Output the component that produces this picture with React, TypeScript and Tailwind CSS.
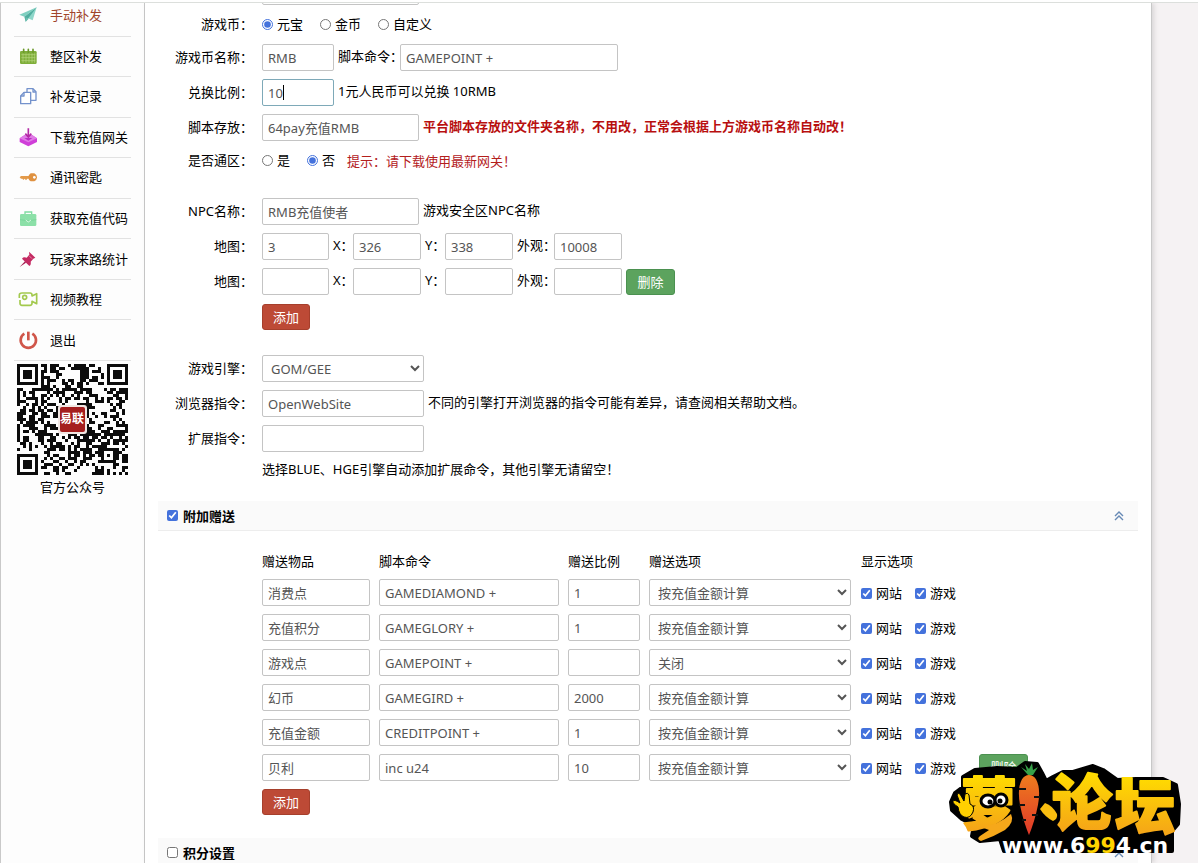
import type { ReactNode } from "react";

const inputBase =
  "h-[27px] rounded-[2px] border border-[#c4c4c4] bg-white px-[5px] text-[13px] text-[#555] outline-none";

function Icon({ children }: { children: ReactNode }) {
  return (
    <svg viewBox="0 0 60 60" className="size-5 shrink-0" aria-hidden="true">
      {children}
    </svg>
  );
}

const menu: { label: string; active?: boolean; icon: ReactNode }[] = [
  {
    label: "手动补发",
    active: true,
    icon: (
      <Icon>
        <path d="M56 7 4 29l15 6z" fill="#7fcfc0" />
        <path d="M56 7 23 37l21 9z" fill="#8ed6c9" />
        <path d="M56 7 19 35l4 15z" fill="#4fae9f" />
        <path d="m23 37 0 13 9-9z" fill="#6cbfb0" />
      </Icon>
    ),
  },
  {
    label: "整区补发",
    icon: (
      <Icon>
        <rect x="6" y="15" width="50" height="39" rx="4" fill="#7fae3a" />
        <path d="M17 10v9M31 10v9M45 10v9" stroke="#6d9a2c" strokeWidth="5" strokeLinecap="round" />
        <path d="M10 26h42M10 35h42M10 44h42M15 22v28M24 22v28M33 22v28M42 22v28M50 22v28" stroke="#b7d67f" strokeWidth="2" />
      </Icon>
    ),
  },
  {
    label: "补发记录",
    icon: (
      <Icon>
        <g fill="#fff" stroke="#7492cc" strokeWidth="4" strokeLinejoin="round">
          <path d="M27 8h18l9 9v26H27z" />
          <path d="M45 8v10h9" fill="none" />
          <path d="M8 30 18 19h20v34H8z" />
          <path d="M18 19v11H8" fill="none" />
        </g>
      </Icon>
    ),
  },
  {
    label: "下载充值网关",
    icon: (
      <Icon>
        <path d="M5 34 20 24h22l15 10v11L31 58 5 45z" fill="#cf3fd8" />
        <path d="M5 34 20 24h22l15 10-26 12z" fill="#e07be6" />
        <path d="M19 33h24l-12 8z" fill="#b82cc4" />
        <path d="M31 4v22M22 20l9 10 9-10" fill="none" stroke="#b32aa6" strokeWidth="5" />
      </Icon>
    ),
  },
  {
    label: "通讯密匙",
    icon: (
      <Icon>
        <path d="M34 27H9l-4 4 4 4h4l3 4 4-4 4 5 4-5h6z" fill="#e39a4a" />
        <path d="M38 19h11q8 4 8 12t-8 12H38q-7-4-7-12t7-12z" fill="#df9140" />
        <circle cx="49" cy="31" r="4" fill="#fff" />
      </Icon>
    ),
  },
  {
    label: "获取充值代码",
    icon: (
      <Icon>
        <path d="M21 20v-8h20v8" fill="none" stroke="#7fdca0" strokeWidth="4" />
        <rect x="6" y="18" width="49" height="36" rx="4" fill="#8ce0a8" />
        <path d="M6 35q25 6 49 0" stroke="#6fd092" strokeWidth="2" fill="none" />
        <path d="m23 36 8 6 8-6" fill="none" stroke="#d9f7e3" strokeWidth="3" />
      </Icon>
    ),
  },
  {
    label: "玩家来路统计",
    icon: (
      <Icon>
        <path d="M33 8 52 26l-6 3-8 9q2 10-4 13L12 29q4-6 14-3l8-9z" fill="#c42a62" />
        <path d="M21 37 5 54l19-13z" fill="#a51e50" />
        <path d="m33 20 9 9" stroke="#e888a8" strokeWidth="3" />
      </Icon>
    ),
  },
  {
    label: "视频教程",
    icon: (
      <Icon>
        <path
          d="M12 12h24q6 0 6 6v3l14-7v30l-14-7v6q0 6-6 6H12q-6 0-6-6V33M4 27V18q0-6 8-6"
          fill="none"
          stroke="#a3c94e"
          strokeWidth="5"
          strokeLinejoin="round"
        />
        <circle cx="20" cy="25" r="6" fill="none" stroke="#a3c94e" strokeWidth="5" />
      </Icon>
    ),
  },
  {
    label: "退出",
    icon: (
      <Icon>
        <path d="M19 11a23 23 0 1 0 24 0" fill="none" stroke="#d0564a" strokeWidth="8" />
        <path d="M31 5v26" stroke="#d0564a" strokeWidth="8" />
      </Icon>
    ),
  },
];

const QR_SIZE = 37;

function qrPath() {
  let seed = 20177;
  const next = () => {
    seed = (seed * 1103515245 + 12345) % 2147483648;
    return seed / 2147483648;
  };
  let d = "";
  const finder = (x: number, y: number) => {
    for (const [ox, oy] of [
      [0, 0],
      [QR_SIZE - 7, 0],
      [0, QR_SIZE - 7],
    ]) {
      const dx = x - ox;
      const dy = y - oy;
      if (dx >= -1 && dx <= 7 && dy >= -1 && dy <= 7) {
        if (dx < 0 || dx > 6 || dy < 0 || dy > 6) return 0;
        const ring = Math.max(Math.abs(dx - 3), Math.abs(dy - 3));
        return ring === 2 ? 0 : 1;
      }
    }
    const ring = Math.max(Math.abs(x - 30), Math.abs(y - 30));
    if (ring <= 2) return ring === 1 ? 0 : 1;
    return -1;
  };
  for (let y = 0; y < QR_SIZE; y++) {
    for (let x = 0; x < QR_SIZE; x++) {
      const random = next() < 0.5 ? 1 : 0;
      const fixed = finder(x, y);
      if ((fixed === -1 ? random : fixed) === 1) d += `M${x} ${y}h1v1h-1z`;
    }
  }
  return d;
}

function QrCode() {
  return (
    <svg viewBox="0 0 111 111" className="size-[111px]" role="img" aria-label="官方公众号">
      <path d={qrPath()} transform="scale(3)" fill="#0c0c0c" shapeRendering="crispEdges" />
      <rect x="41" y="41" width="29" height="29" rx="3" fill="#f1e6e2" />
      <rect x="43" y="43" width="25" height="25" rx="2" fill="#a51f1f" />
      <text
        x="55"
        y="59"
        textAnchor="middle"
        fontSize="12"
        fontWeight="700"
        fill="#fff"
        fontFamily="'Noto Sans CJK SC', sans-serif"
      >
        易联
      </text>
    </svg>
  );
}

function Sidebar() {
  return (
    <aside className="w-[145px] shrink-0 border-x border-[#c9c9c9] bg-[#fdfdfd] px-[13px]">
      <nav>
        <ul className="-mt-[7px] grid h-[365px] auto-rows-fr">
          {menu.map((m) => (
            <li key={m.label} className="border-b border-[#e2e2e2]">
              <a
                href="#"
                className={`flex h-full items-center gap-3 pb-px pl-1 whitespace-nowrap ${m.active ? "text-[#a0452c]" : "text-black"}`}
              >
                {m.icon}
                {m.label}
              </a>
            </li>
          ))}
        </ul>
      </nav>
      <div className="flex flex-col items-center pt-[3px]">
        <QrCode />
        <p className="mt-[2px] leading-5">官方公众号</p>
      </div>
    </aside>
  );
}

function Row({ label, children, short }: { label?: string; children: ReactNode; short?: boolean }) {
  return (
    <div className={`flex items-center ${short ? "h-[23px]" : "h-[27px]"}`}>
      <div className="mr-[9px] w-[95px] shrink-0 pb-[2px] text-right whitespace-nowrap">{label}</div>
      <div className="flex items-center gap-1 whitespace-nowrap">{children}</div>
    </div>
  );
}

function Note({ children }: { children: ReactNode }) {
  return <span className="pb-[3px]">{children}</span>;
}

function Field({ label, value, width }: { label: string; value: string; width: string }) {
  return <input type="text" aria-label={label} defaultValue={value} className={`${inputBase} ${width}`} />;
}

function Radio({ name, label, checked }: { name: string; label: string; checked?: boolean }) {
  return (
    <label className="flex items-center gap-1">
      <input type="radio" name={name} defaultChecked={checked} className="size-[11px] accent-[#4472dc]" />
      <span className="pb-[2px]">{label}</span>
    </label>
  );
}

function Check({ label, checked }: { label: string; checked?: boolean }) {
  return (
    <label className="flex items-center gap-1">
      <input type="checkbox" defaultChecked={checked} className="size-[11px] accent-[#4472dc]" />
      <span className="pb-[2px]">{label}</span>
    </label>
  );
}

function RedButton() {
  return (
    <button type="button" className="h-[26px] w-12 rounded-[3px] border border-[#a63f2c] bg-[#bd4a36] text-white">
      添加
    </button>
  );
}

function GreenButton() {
  return (
    <button type="button" className="h-[26px] w-[49px] rounded-[3px] border border-[#4b9150] bg-[#5ca35e] text-white">
      删除
    </button>
  );
}

function Select({ label, value, options, width }: { label: string; value: string; options: string[]; width: string }) {
  return (
    <select
      aria-label={label}
      defaultValue={value}
      className={`h-[27px] rounded-[2px] border border-[#c4c4c4] bg-white px-1 text-[13px] text-[#555] ${width}`}
    >
      {options.map((o) => (
        <option key={o}>{o}</option>
      ))}
    </select>
  );
}

function MapRow({ values, removable }: { values: string[]; removable?: boolean }) {
  return (
    <Row label="地图：">
      <Field label="地图" value={values[0]} width="w-[67px]" />
      <span className="w-4 pb-[3px]">X：</span>
      <Field label="X" value={values[1]} width="w-[68px]" />
      <span className="w-4 pb-[3px]">Y：</span>
      <Field label="Y" value={values[2]} width="w-[68px]" />
      <span className="w-[33px] pb-[3px]">外观：</span>
      <Field label="外观" value={values[3]} width="w-[68px]" />
      {removable && <GreenButton />}
    </Row>
  );
}

function SectionHeader({ title, checked }: { title: string; checked?: boolean }) {
  return (
    <div className="mr-[13px] flex h-[30px] items-center justify-between border-b border-[#ededed] bg-[#fafafa] pr-[14px] pl-[9px]">
      <label className="flex items-center gap-[5px] font-bold">
        <input type="checkbox" defaultChecked={checked} className="size-[11px] accent-[#4472dc]" />
        {title}
      </label>
      <button type="button" aria-label="收起">
        <svg viewBox="0 0 10 10" className="size-[10px]" fill="none" stroke="#6689b5" strokeWidth="1.4">
          <path d="m1 5 4-4 4 4M1 9l4-4 4 4" />
        </svg>
      </button>
    </div>
  );
}

const gifts = [
  ["消费点", "GAMEDIAMOND +", "1", "按充值金额计算"],
  ["充值积分", "GAMEGLORY +", "1", "按充值金额计算"],
  ["游戏点", "GAMEPOINT +", "", "关闭"],
  ["幻币", "GAMEGIRD +", "2000", "按充值金额计算"],
  ["充值金额", "CREDITPOINT +", "1", "按充值金额计算"],
  ["贝利", "inc u24", "10", "按充值金额计算"],
];

function GiftTable() {
  return (
    <table className="ml-[104px] border-collapse text-left whitespace-nowrap">
      <thead>
        <tr className="h-[27px] align-top leading-[19px]">
          <th className="font-normal">赠送物品</th>
          <th className="font-normal">脚本命令</th>
          <th className="font-normal">赠送比例</th>
          <th className="font-normal">赠送选项</th>
          <th className="font-normal">显示选项</th>
          <th aria-label="操作" />
        </tr>
      </thead>
      <tbody>
        {gifts.map(([name, cmd, rate, mode], i) => (
          <tr key={name} className="h-[35px] align-top">
            <td className="pr-[9px]">
              <Field label="赠送物品" value={name} width="w-[108px]" />
            </td>
            <td className="pr-[9px]">
              <Field label="脚本命令" value={cmd} width="w-[180px]" />
            </td>
            <td className="pr-[9px]">
              <Field label="赠送比例" value={rate} width="w-[72px]" />
            </td>
            <td className="pr-[10px]">
              <Select label="赠送选项" value={mode} options={["按充值金额计算", "关闭"]} width="w-[202px]" />
            </td>
            <td className="pr-[23px]">
              <div className="flex h-[29px] items-center gap-[13px]">
                <Check label="网站" checked />
                <Check label="游戏" checked />
              </div>
            </td>
            <td>{i === gifts.length - 1 && <GreenButton />}</td>
          </tr>
        ))}
      </tbody>
    </table>
  );
}

function ForumLogo() {
  const hand = "M10 48q-6-4-5-6t7 2l-3-8q1-3 3-1l4 7 1-7q3-2 4 1l1 9q5 2 3 8-3 7-9 5-5-2-6-10z";
  return (
    <svg viewBox="0 0 236 104" className="absolute right-[14px] bottom-0 h-[104px] w-[236px]" role="img" aria-label="萝卜论坛">
      <defs>
        <linearGradient id="gold" x1="0" y1="0" x2="0" y2="1">
          <stop offset="0.2" stopColor="#ffdc00" />
          <stop offset="1" stopColor="#f39a1c" />
        </linearGradient>
        <linearGradient id="carrot" x1="0" y1="0" x2="0" y2="1">
          <stop offset="0" stopColor="#ee7d1e" />
          <stop offset="1" stopColor="#e0342a" />
        </linearGradient>
      </defs>
      <path
        d="M3 43 7 34l8-6V18l12-7 22-2 20 1 8-6 12 1 5 9 4 8 7-4 10-5h10l20-6 10 4 14 10 19-1h27l13 6 3 19-1 20-6 7v20H56l-4-12-20 2-8-5 2-11-12-6-10-9z"
        stroke="#000"
        strokeWidth="4"
        strokeLinejoin="round"
      />
      <g
        fill="url(#gold)"
        stroke="url(#gold)"
        strokeWidth="2"
        strokeLinejoin="round"
        fontFamily="'Noto Sans CJK SC', sans-serif"
        fontWeight="900"
      >
        <text x="13" y="65" fontSize="56">
          萝
        </text>
        <text x="104" y="66" fontSize="60">
          论
        </text>
        <text x="167" y="70" fontSize="60">
          坛
        </text>
      </g>
      <path d="M33 68q16-1 30-13 4 8-6 16-12 7-24 11-5-2-1-5l9-6z" fill="#f6a81a" />
      <path d={hand} fill="#ffd000" stroke="#000" strokeWidth="1" />
      <path d="M97 44q8 3 12 11 1 5-4 7-8-4-13-12z" fill="#f8bd10" />
      <path d="M73 20q3-5 8-5t8 5q5 9 2 26-3 16-10 33-7-17-10-33-3-17 2-26z" fill="url(#carrot)" stroke="#000" strokeWidth="2" />
      <path d="M71 30h7M92 38h-6M71 46h6M90 56h-6M74 61h4" stroke="#111" strokeWidth="2" />
      <path d="m80 16-7-8 6 4-2-7 4 5 3-6 1 7 5-3-5 8z" fill="#37a048" />
      <g fill="#fff" stroke="#000" strokeWidth="3">
        <ellipse cx="40" cy="42" rx="7" ry="6" />
        <ellipse cx="53" cy="41" rx="6" ry="6" />
      </g>
      <circle cx="42" cy="43" r="2.5" />
      <circle cx="52" cy="42" r="2.5" />
      <text x="54" y="94" fontSize="22" fontWeight="700" fontFamily="'DejaVu Sans', sans-serif" fill="#fff">
        www.6<tspan fill="#ffd400">99</tspan>4.cn
      </text>
    </svg>
  );
}

export default function App() {
  return (
    <div className="relative flex h-screen flex-col overflow-hidden bg-[#f5f2f3] font-['Noto_Sans','Noto_Sans_CJK_SC',sans-serif] text-[13px] leading-5 text-black">
      <div className="z-10 h-[3px] shrink-0 border-b border-[#dcdfdc] bg-white" />
      <div className="flex min-h-0 flex-1">
        <Sidebar />
        <main className="mr-[46px] flex-1 overflow-hidden border-r border-[#c8c8c8] bg-white pl-[13px] shadow-[2px_0_5px_rgba(0,0,0,0.12)]">
          <form>
            <div className="-mt-[25px] flex flex-col gap-2">
              <Row>
                <Field label="名称" value="" width="w-[157px]" />
              </Row>
              <Row label="游戏币：" short>
                <div className="flex gap-[17px]">
                  <Radio name="coin" label="元宝" checked />
                  <Radio name="coin" label="金币" />
                  <Radio name="coin" label="自定义" />
                </div>
              </Row>
              <Row label="游戏币名称：">
                <Field label="游戏币名称" value="RMB" width="w-[72px]" />
                <span className="w-[58px] pb-[3px]">脚本命令：</span>
                <Field label="脚本命令" value="GAMEPOINT +" width="w-[218px]" />
              </Row>
              <Row label="兑换比例：">
                <div className="relative">
                  <input
                    type="text"
                    aria-label="兑换比例"
                    defaultValue="10"
                    className="h-[27px] w-[72px] rounded-[2px] border border-[#7ea9b8] bg-white px-[5px] text-[13px] text-[#555] outline-none"
                  />
                  <span className="absolute top-[6px] left-[21px] h-[15px] w-px bg-black" />
                </div>
                <Note>1元人民币可以兑换 10RMB</Note>
              </Row>
              <Row label="脚本存放：">
                <Field label="脚本存放" value="64pay充值RMB" width="w-[157px]" />
                <Note>
                  <strong className="font-bold text-[#b80f0f]">
                    平台脚本存放的文件夹名称，不用改，正常会根据上方游戏币名称自动改！
                  </strong>
                </Note>
              </Row>
              <Row label="是否通区：" short>
                <div className="flex gap-[17px]">
                  <Radio name="zone" label="是" />
                  <Radio name="zone" label="否" checked />
                </div>
                <span className="ml-2 text-[#b3201c]">提示：请下载使用最新网关！</span>
              </Row>
            </div>

            <div className="mt-[26px] flex flex-col gap-2">
              <Row label="NPC名称：">
                <Field label="NPC名称" value="RMB充值使者" width="w-[157px]" />
                <Note>游戏安全区NPC名称</Note>
              </Row>
              <MapRow values={["3", "326", "338", "10008"]} />
              <MapRow values={["", "", "", ""]} removable />
              <Row>
                <RedButton />
              </Row>
            </div>

            <div className="mt-[25px] flex flex-col gap-2">
              <Row label="游戏引擎：">
                <Select label="游戏引擎" value="GOM/GEE" options={["GOM/GEE", "BLUE", "HGE"]} width="w-[162px]" />
              </Row>
              <Row label="浏览器指令：">
                <Field label="浏览器指令" value="OpenWebSite" width="w-[162px]" />
                <Note>不同的引擎打开浏览器的指令可能有差异，请查阅相关帮助文档。</Note>
              </Row>
              <Row label="扩展指令：">
                <Field label="扩展指令" value="" width="w-[162px]" />
              </Row>
              <p className="ml-[104px] h-[23px] leading-[18px]">
                选择BLUE、HGE引擎自动添加扩展命令，其他引擎无请留空！
              </p>
            </div>

            <div className="mt-[18px]">
              <SectionHeader title="附加赠送" checked />
            </div>
            <div className="mt-[21px]">
              <GiftTable />
              <div className="ml-[104px] flex">
                <RedButton />
              </div>
            </div>
            <div className="mt-[23px]">
              <SectionHeader title="积分设置" />
            </div>
          </form>
        </main>
      </div>
      <ForumLogo />
    </div>
  );
}
